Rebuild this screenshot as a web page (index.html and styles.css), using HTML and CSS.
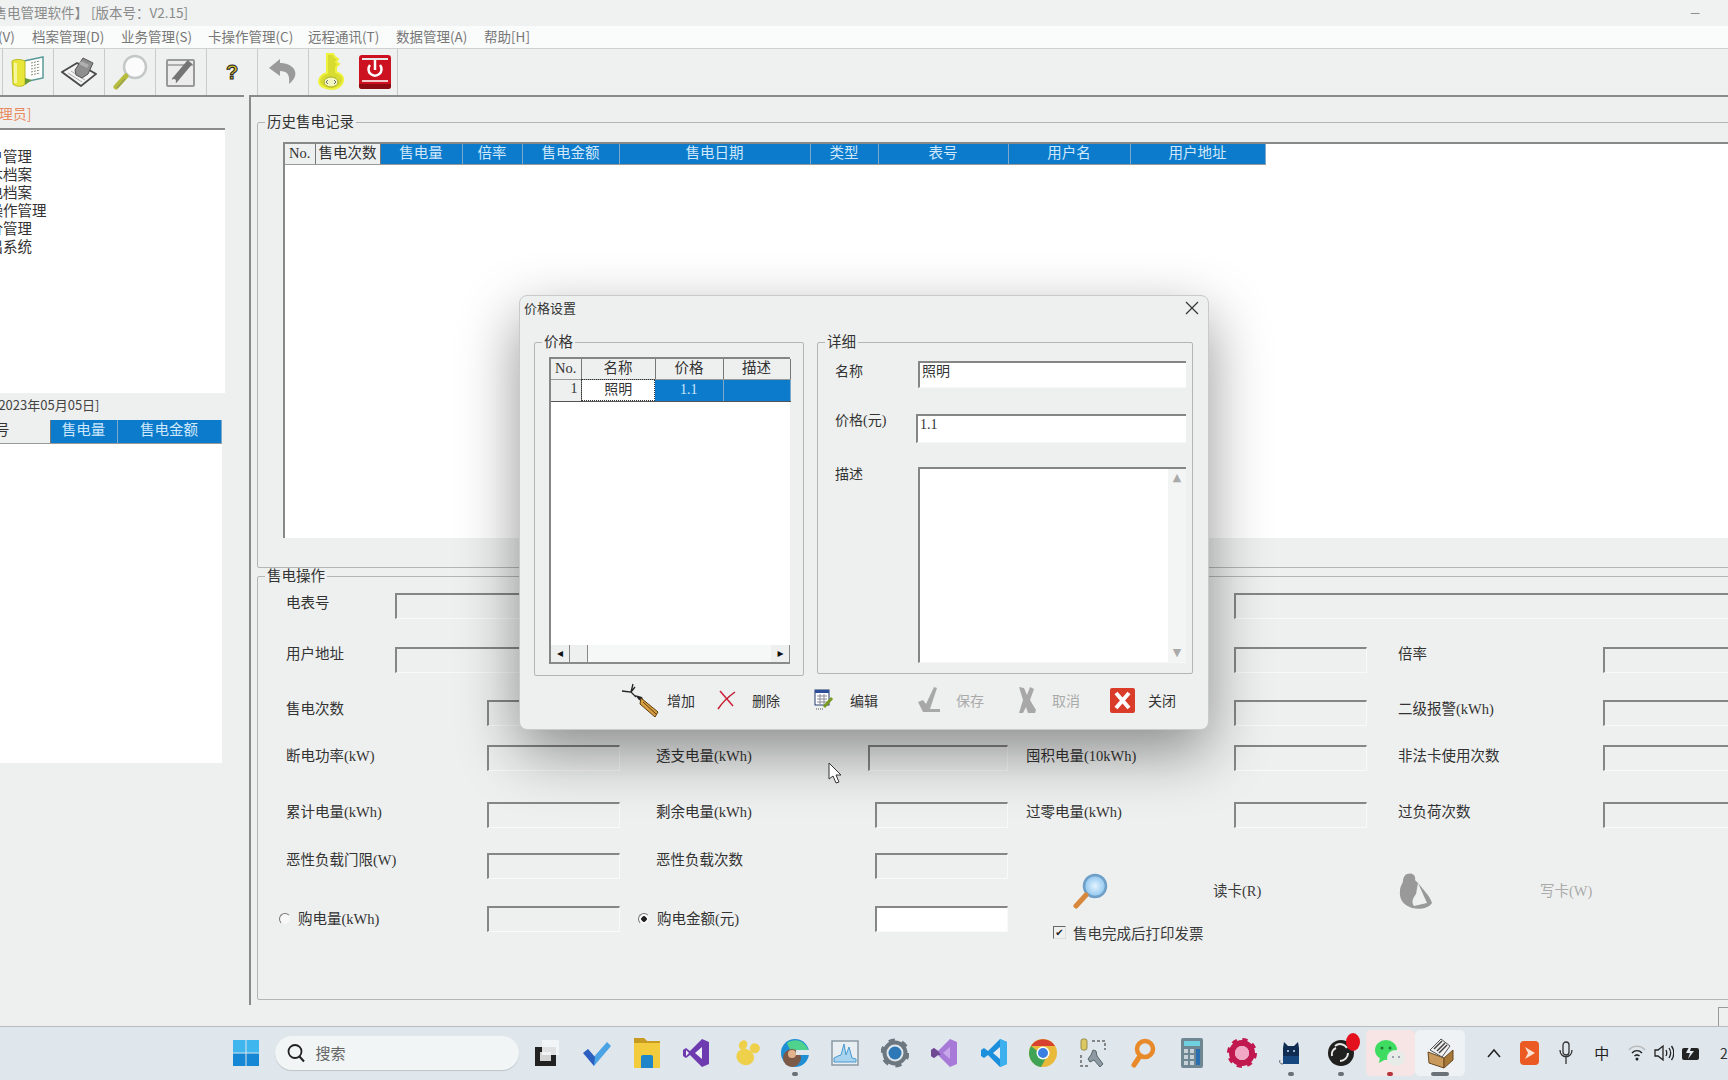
FILE: index.html
```html
<!DOCTYPE html>
<html lang="zh-CN">
<head>
    <meta charset="UTF-8">
    <title>售电管理软件</title>
    <link rel="stylesheet" href="styles.css">
</head>
<body>
    <div class="app">
        <div class="title-bar">
            <span class="title-text">【售电管理软件】 [版本号：V2.15]</span>
            <span class="minimize">—</span>
        </div>
        <nav class="menu-bar">
            <span class="menu-first">(V)</span>
            <span class="m1">档案管理(D)</span>
            <span class="m2">业务管理(S)</span>
            <span class="m3">卡操作管理(C)</span>
            <span class="m4">远程通讯(T)</span>
            <span class="m5">数据管理(A)</span>
            <span class="m6">帮助[H]</span>
        </nav>
        <div class="tool-bar">
            <div class="tool">
                <svg width="34" height="32" viewBox="0 0 34 32"><path fill="#fff" stroke="#5a9a98" stroke-width="1.500" d="M13 5l19-4v21l-19 4z"/><path stroke="#8a8a7a" stroke-dasharray="2 1" d="M20 7l9-2M20 10l9-2M20 13l9-2M20 16l9-2M20 19l9-2"/><path fill="#e8e63a" stroke="#b8b820" d="M1 5c3-2 9-2 13 0v23c-1 3-10 3-12 0z"/><path fill="#f6f5a0" d="M3 7h3v20H3z"/><path fill="#6a9a3a" d="M14 22l7 2-7 5z"/></svg>
            </div>
            <div class="tool">
                <svg width="36" height="30" viewBox="0 0 36 30"><path fill="#f4f4f4" stroke="#4a4a4a" stroke-width="1.800" d="M1 15L16 6l19 11-15 12z"/><path stroke="#aaa" d="M7 16l14 9M10 14l14 9"/><path fill="#8e8e8e" stroke="#555" d="M14 13l8-12 10 5-5 11-6 4-6-3z"/><path fill="#b0b0b0" d="M20 4l8 4-2 3-8-4z"/></svg>
            </div>
            <div class="tool">
                <svg width="36" height="36" viewBox="0 0 36 36"><circle cx="23" cy="13" r="11" fill="#fbfbfb" stroke="#c4c8c8" stroke-width="2.500"/><path stroke="#b6bc3c" stroke-width="5" stroke-linecap="round" d="M14 22L4 33"/><path stroke="#808a60" d="M13 25L5 34"/></svg>
            </div>
            <div class="tool">
                <svg width="32" height="32" viewBox="0 0 32 32"><rect x="2" y="4" width="27" height="26" rx="1" fill="#ececec" stroke="#999" stroke-width="2"/><path stroke="#999" stroke-width="1.500" d="M2 9h27"/><path stroke="#757575" stroke-width="6" d="M9 25L25 6"/><circle cx="9" cy="25" r="2" fill="#eee"/></svg>
            </div>
            <div class="tool"><span class="help-mark">?</span></div>
            <div class="tool">
                <svg width="30" height="30" viewBox="0 0 30 30"><path fill="#9a9a9a" d="M12 2L1 11l11 8v-5c7 0 10 3 9 13 6-5 8-10 5-15-3-4-8-6-14-6z"/></svg>
            </div>
            <div class="tool">
                <svg width="32" height="38" viewBox="0 0 32 38"><path fill="#d8dc30" stroke="#eef23c" stroke-width="2" d="M11 1h6l2 3 3 2-2 3 3 2-3 3v5c6 2 8 6 7 9-1 5-6 8-11 8S4 34 3 29c0-4 3-8 8-9z"/><ellipse cx="15" cy="29" rx="7" ry="5" fill="#f4f6c0" stroke="#a8ac20"/><path stroke="#667" fill="none" d="M12 27l-2 2 2 2M18 27l2 2-2 2"/></svg>
            </div>
            <div class="tool power">
                <svg width="32" height="34" viewBox="0 0 32 34"><rect width="32" height="34" rx="3" fill="#cc1220"/><path fill="#f3c9cc" d="M3 25h26v2H3z"/><path fill="#8d0a12" d="M0 29h32v2a3 3 0 0 1-3 3H3a3 3 0 0 1-3-3z"/><path fill="#e8e8e8" d="M3 3h26v2H3z"/><path fill="none" stroke="#fff" stroke-width="2.500" d="M11 10a6.500 6.500 0 1 0 10 0"/><path stroke="#fff" stroke-width="2.500" d="M16 5v10"/></svg>
            </div>
        </div>

        <div class="main">
            <aside class="left-pane">
                <div class="user-line">[管理员]</div>
                <ul class="tree">
                    <li>用户管理</li>
                    <li>基本档案</li>
                    <li>售电档案</li>
                    <li>卡操作管理</li>
                    <li>电价管理</li>
                    <li>退出系统</li>
                </ul>
                <div class="date-line">[2023年05月05日]</div>
                <div class="side-table">
                    <table class="grid">
                        <col width="80"><col width="67"><col width="104">
                        <tr><th class="side-no">表号</th><th class="sel">售电量</th><th class="sel">售电金额</th></tr>
                    </table>
                </div>
            </aside>

            <section class="right-pane">
                <fieldset class="group history">
                    <legend>历史售电记录</legend>
                    <div class="history-table">
                        <table class="grid">
                            <col width="30"><col width="65"><col width="82"><col width="60"><col width="97"><col width="191"><col width="68"><col width="130"><col width="122"><col width="135">
                            <tr>
                                <th>No.</th><th>售电次数</th><th class="sel">售电量</th><th class="sel">倍率</th><th class="sel">售电金额</th><th class="sel">售电日期</th><th class="sel">类型</th><th class="sel">表号</th><th class="sel">用户名</th><th class="sel">用户地址</th>
                            </tr>
                        </table>
                    </div>
                </fieldset>

                <fieldset class="group operate">
                    <legend>售电操作</legend>
                    <div class="op-row r1">
                        <span class="lbl col-short">电表号</span>
                        <div class="field col-a-wide"></div>
                        <div class="field col-c-wide"></div>
                    </div>
                    <div class="op-row r2">
                        <span class="lbl col-short">用户地址</span>
                        <div class="field col-a-wide"></div>
                        <div class="field col-c"></div>
                        <span class="lbl col-l4">倍率</span>
                        <div class="field col-d"></div>
                    </div>
                    <div class="op-row r3">
                        <span class="lbl col-a">售电次数</span>
                        <div class="field col-a2"></div>
                        <div class="field col-c"></div>
                        <span class="lbl col-l4">二级报警(kWh)</span>
                        <div class="field col-d"></div>
                    </div>
                    <div class="op-row r4">
                        <span class="lbl col-a">断电功率(kW)</span>
                        <div class="field col-a2"></div>
                        <span class="lbl col-l2">透支电量(kWh)</span>
                        <div class="field col-b wide"></div>
                        <span class="lbl col-l3">囤积电量(10kWh)</span>
                        <div class="field col-c"></div>
                        <span class="lbl col-l4">非法卡使用次数</span>
                        <div class="field col-d"></div>
                    </div>
                    <div class="op-row r5">
                        <span class="lbl col-a">累计电量(kWh)</span>
                        <div class="field col-a2"></div>
                        <span class="lbl col-l2">剩余电量(kWh)</span>
                        <div class="field col-b"></div>
                        <span class="lbl col-l3">过零电量(kWh)</span>
                        <div class="field col-c"></div>
                        <span class="lbl col-l4">过负荷次数</span>
                        <div class="field col-d"></div>
                    </div>
                    <div class="op-row r6">
                        <span class="lbl col-a">恶性负载门限(W)</span>
                        <div class="field col-a2"></div>
                        <span class="lbl col-l2">恶性负载次数</span>
                        <div class="field col-b"></div>
                        <div class="card-actions">
                            <svg width="36" height="36" viewBox="0 0 36 36"><defs><radialGradient id="lens"><stop offset="0" stop-color="#e4f4ff"/><stop offset="1" stop-color="#8cc4ee"/></radialGradient></defs><circle cx="23" cy="13" r="11" fill="url(#lens)" stroke="#6e9fc6" stroke-width="2.500"/><path stroke="#d8883c" stroke-width="5" stroke-linecap="round" d="M14 22L4 33"/></svg>
                            <span class="card-read">读卡(R)</span>
                            <svg width="34" height="36" viewBox="0 0 34 36"><path fill="#999" d="M8 1c6-2 9 2 8 6l2 2c5 6 13 14 15 21-3 5-12 7-20 5C4 32 0 26 1 18c0-5 3-8 3-10S5 2 8 1z"/><path fill="#eef0ef" d="M19 10l9 20-13 3c-3-4-1-8 2-12z"/></svg>
                            <span class="card-write">写卡(W)</span>
                        </div>
                    </div>
                    <div class="op-row r7">
                        <label class="lbl col-a radio-label"><span class="radio"></span>购电量(kWh)</label>
                        <div class="field col-a2"></div>
                        <label class="lbl col-l2 radio-label second"><span class="radio on"></span>购电金额(元)</label>
                        <div class="field col-b live"></div>
                        <label class="print-check"><span class="check">✔</span>售电完成后打印发票</label>
                    </div>
                </fieldset>
            </section>
        </div>

        <div class="status-bar"><span class="grip"></span></div>

        <footer class="task-bar">
            <div class="task-item">
                <svg width="28" height="28" viewBox="0 0 28 28"><path fill="#3fb6ee" d="M1 1h12.500v12.500H1zM14.500 1H27v12.500H14.500z"/><path fill="#1587d4" d="M1 14.500h12.500V27H1zM14.500 14.500H27V27H14.500z"/></svg>
            </div>
            <div class="search-box">
                <svg width="20" height="20" viewBox="0 0 20 20"><circle cx="9" cy="8.500" r="6.500" fill="none" stroke="#222" stroke-width="1.800"/><path stroke="#222" stroke-width="2" d="M13.500 13.500L18 18.500"/></svg>
                <span>搜索</span>
            </div>
            <div class="task-apps">
                <div class="task-item"><svg width="28" height="28" viewBox="0 0 28 28"><path fill="#222" d="M2 8h21v19H2z"/><path fill="#d4d4d4" d="M7 13h11v9H7z"/><path fill="#f4f6f8" d="M9 1h17v15H9z" opacity=".9"/></svg></div>
                <div class="task-item"><svg width="30" height="28" viewBox="0 0 30 28"><path fill="#4ba3e6" d="M10 20L25 3l4 4-17 20z"/><path fill="#2a5ec0" d="M1 14l5-4 7 8-1 9z"/></svg></div>
                <div class="task-item"><svg width="28" height="32" viewBox="0 0 28 32"><path fill="#f3cc3d" d="M1 1h10l3 3h13v27H1z"/><path fill="#c89b22" d="M1 1h10l3 3h13v2H1z"/><path fill="#1f86c9" d="M8 20a2 2 0 0 1 2-2h8a2 2 0 0 1 2 2v11H8z"/></svg></div>
                <div class="task-item"><svg width="28" height="30" viewBox="0 0 28 30"><path fill="#6d3ab0" d="M20 1l7 3v22l-7 3L8 17l-4 3-3-2V12l3-2 4 3z"/><path fill="#eef1f4" d="M20 9v12l-7-6zM4 12l3 3-3 3z"/></svg></div>
                <div class="task-item"><svg width="28" height="28" viewBox="0 0 28 28"><g fill="#eed04a" transform="rotate(25 14 14)"><ellipse cx="15" cy="18" rx="9" ry="8"/><ellipse cx="20" cy="6" rx="5" ry="5"/><ellipse cx="8" cy="8" rx="4" ry="5"/></g></svg></div>
                <div class="task-item on">
                    <svg width="30" height="30" viewBox="0 0 30 30"><circle cx="15" cy="15" r="14" fill="#1f8fd4"/><path fill="#4fd38c" d="M7 5c8-6 20-2 22 10H11C10 10 8 8 7 5z"/><circle cx="12" cy="20" r="9" fill="#7d5a48"/><circle cx="12" cy="16" r="4" fill="#e3b48c"/><path fill="#dfe6ec" d="M16 12h14v5H16z"/></svg>
                </div>
                <div class="task-item"><svg width="28" height="28" viewBox="0 0 28 28"><path fill="#e8eef2" stroke="#8c9aa4" stroke-width="1.500" d="M1 2h26v24H1z"/><path fill="#a8d4f0" stroke="#4a9ad0" d="M3 23v-4l4-2 3-1 3-11 2 11 3-8 3 11 4 1v3z"/></svg></div>
                <div class="task-item"><svg width="28" height="30" viewBox="0 0 28 30"><circle cx="14" cy="15" r="10.500" fill="none" stroke="#6d7780" stroke-width="4"/><circle cx="14" cy="15" r="12.500" fill="none" stroke="#6d7780" stroke-width="4" stroke-dasharray="6 7.100"/><circle cx="14" cy="15" r="6.500" fill="#2f78b8"/></svg></div>
                <div class="task-item"><svg width="28" height="30" viewBox="0 0 28 30"><path fill="#a77ad8" d="M20 1l7 3v22l-7 3L8 17l-4 3-3-2V12l3-2 4 3z"/><path fill="#6e4a94" d="M4 10l4 3 3 4-3 0-4 3-3-2V12z"/><path fill="#c8a6ea" d="M20 9v12l-7-6z"/></svg></div>
                <div class="task-item"><svg width="28" height="30" viewBox="0 0 28 30"><path fill="#1c8fdc" d="M20 1l7 3v22l-7 3L8 17l-4 3-3-2V12l3-2 4 3z"/><path fill="#3fb0ee" d="M20 1l7 3v22l-7 3z"/><path fill="#e6ebf0" d="M20 9v12l-7-6z"/></svg></div>
                <div class="task-item"><svg width="30" height="30" viewBox="0 0 30 30"><circle cx="15" cy="15" r="14" fill="#e8b93a"/><path fill="#d8402f" d="M3 8a14 14 0 0 1 24 0H15z"/><path fill="#3fa455" d="M3 8a14 14 0 0 0 10 21l5-9z"/><circle cx="15" cy="15" r="6.500" fill="#fff"/><circle cx="15" cy="15" r="5" fill="#3a7fe0"/></svg></div>
                <div class="task-item"><svg width="30" height="30" viewBox="0 0 30 30"><rect x="3" y="1" width="6" height="11" rx="2" fill="#dcc860" stroke="#98904c"/><path fill="none" stroke="#666" stroke-dasharray="3 2" stroke-width="1.500" d="M14 3h13v9M3 17v11h8"/><path fill="#8d99a3" stroke="#566" d="M15 12l3 1 1 5 6 8-3 3-6-7-4 2-2-3 3-4z"/></svg></div>
                <div class="task-item"><svg width="28" height="30" viewBox="0 0 28 30"><circle cx="16" cy="11" r="8" fill="none" stroke="#e88a2a" stroke-width="4.500"/><path stroke="#e88a2a" stroke-width="5" stroke-linecap="round" d="M11 18L5 27"/></svg></div>
                <div class="task-item"><svg width="24" height="30" viewBox="0 0 24 30"><rect x="1" width="22" height="30" rx="2" fill="#6f8793"/><path fill="#6fd0e0" d="M4 3h16v5H4z"/><path fill="#c7d2d8" d="M4 11h4v4H4zM10 11h4v4h-4zM4 17h4v4H4zM10 17h4v4h-4zM4 23h4v4H4zM10 23h4v4h-4z"/><path fill="#2b6fb0" d="M16 11h4v16h-4z"/></svg></div>
                <div class="task-item"><svg width="30" height="30" viewBox="0 0 30 30"><circle cx="15" cy="15" r="10" fill="none" stroke="#c0184f" stroke-width="6"/><circle cx="15" cy="15" r="13" fill="none" stroke="#c0184f" stroke-width="4" stroke-dasharray="5 5.200"/><circle cx="15" cy="15" r="7" fill="#f0a8c4"/></svg></div>
                <div class="task-item on"><svg width="24" height="26" viewBox="0 0 24 26"><path fill="#0f2d52" d="M4 24V8l1-6 4 4h6l4-4 1 6v16z"/><path fill="#16467e" d="M4 16h16v8H4z"/><circle cx="9" cy="11" r="1" fill="#cde"/><circle cx="15" cy="11" r="1" fill="#cde"/><path stroke="#556" fill="none" d="M4 24c-3 0-4-2-3-4"/></svg></div>
                <div class="task-item on">
                    <svg width="30" height="30" viewBox="0 0 30 30"><circle cx="15" cy="15" r="13" fill="#20201f"/><path fill="none" stroke="#e8e8e8" stroke-width="2" d="M9 8a8 8 0 0 1 12 2M22 15a8 8 0 0 1-8 8M6 18a7 7 0 0 1 4-8"/></svg>
                    <span class="badge"></span>
                </div>
                <div class="task-item wechat on"><svg width="32" height="30" viewBox="0 0 32 30"><ellipse cx="12" cy="12" rx="11" ry="10" fill="#3fdc62"/><path fill="#3fdc62" d="M6 19l-1 6 7-4z"/><circle cx="8" cy="10" r="1.500" fill="#1a7a34"/><circle cx="16" cy="10" r="1.500" fill="#1a7a34"/><ellipse cx="22" cy="20" rx="9" ry="8" fill="#e8ece8"/><circle cx="19" cy="19" r="1" fill="#889"/><circle cx="25" cy="19" r="1" fill="#889"/></svg></div>
                <div class="task-item current on"><svg width="30" height="32" viewBox="0 0 30 32"><path fill="#c99a5c" stroke="#6a4a22" d="M3 15l16 6v10L4 26z"/><path fill="#a87838" stroke="#6a4a22" d="M19 21l9-8v10l-9 8z"/><path fill="#f0f0f0" stroke="#555" d="M5 13L16 2l9 7-8 11z"/><path stroke="#444" stroke-width="1.500" d="M9 12l8-8M12 14l8-8M14 16l8-8"/></svg></div>
            </div>
            <div class="tray">
                <span class="tray-item"><svg width="14" height="10" viewBox="0 0 14 10"><path fill="none" stroke="#222" stroke-width="1.500" d="M1 9l6-7 6 7"/></svg></span>
                <span class="tray-item"><svg width="20" height="24" viewBox="0 0 20 24"><rect width="19" height="24" rx="4" fill="#ea5a22"/><path fill="#fbe2d4" d="M5 6l10 6-10 6 3-6z"/></svg></span>
                <span class="tray-item"><svg width="14" height="24" viewBox="0 0 14 24"><rect x="4" y="1" width="6" height="13" rx="3" fill="none" stroke="#333" stroke-width="1.300"/><path fill="none" stroke="#333" stroke-width="1.300" d="M1 9c0 9 12 9 12 0M7 16v7"/></svg></span>
                <span class="tray-item ime">中</span>
                <span class="tray-item slim"><svg width="18" height="18" viewBox="0 0 18 18"><path fill="none" stroke="#bbb" stroke-width="1.500" d="M1 6c4-5 12-5 16 0"/><path fill="none" stroke="#222" stroke-width="1.500" d="M4 9c3-3 7-3 10 0M6.500 12c1.500-1.500 3.500-1.500 5 0"/><circle cx="9" cy="15" r="1.500" fill="#222"/></svg></span>
                <span class="tray-item slim"><svg width="20" height="18" viewBox="0 0 20 18"><path fill="none" stroke="#222" stroke-width="1.300" d="M1 6h3l5-4v14l-5-4H1zM12 6c1 2 1 4 0 6M15 4c2 3 2 7 0 10M17.500 2c3 4 3 10 0 14"/></svg></span>
                <span class="tray-item slim"><svg width="22" height="20" viewBox="0 0 22 20"><rect x="2" y="5" width="17" height="12" rx="2" fill="#222"/><path fill="#e3e9ef" d="M10 2L6 10h4l-2 6 6-8h-4l2-6z"/></svg></span>
                <span class="clock">2</span>
            </div>
        </footer>
    </div>

    <div class="dialog">
        <div class="dlg-title">
            <span>价格设置</span>
            <svg width="14" height="14" viewBox="0 0 14 14"><path stroke="#333" stroke-width="1.200" d="M1 1l12 12M13 1L1 13"/></svg>
        </div>
        <div class="dlg-body">
            <fieldset class="group price-group">
                <legend>价格</legend>
                <div class="price-table">
                    <table class="grid">
                        <col width="30"><col width="74"><col width="68"><col width="67">
                        <tr><th>No.</th><th>名称</th><th>价格</th><th>描述</th></tr>
                        <tr class="row"><th class="row-no">1</th><td class="focus">照明</td><td class="sel">1.1</td><td class="sel"></td></tr>
                    </table>
                    <div class="h-scroll">
                        <span class="arrow-btn">◂</span>
                        <span class="thumb"></span>
                        <span class="arrow-btn end">▸</span>
                    </div>
                </div>
            </fieldset>
            <fieldset class="group detail-group">
                <legend>详细</legend>
                <div class="detail-row name-row">
                    <span class="detail-label">名称</span>
                    <div class="input">照明</div>
                </div>
                <div class="detail-row cost-row">
                    <span class="detail-label">价格(元)</span>
                    <div class="input">1.1</div>
                </div>
                <div class="detail-row desc-row">
                    <span class="detail-label">描述</span>
                    <div class="input memo">
                        <div class="v-scroll"><span>▲</span><span>▼</span></div>
                    </div>
                </div>
            </fieldset>
        </div>
        <div class="dlg-buttons">
            <div class="dlg-btn tight">
                <svg width="38" height="34" viewBox="0 0 38 34"><path fill="none" stroke="#222" stroke-width="1.300" d="M1 8l9 1 5 5M10 9l2-8M10 9l4-5"/><path fill="#222" d="M14 12l7 2 2 5-5-2z"/><path fill="#d8a040" stroke="#5a3a10" d="M20 15l17 14-3 5-15-13z"/><path stroke="#5a3a10" d="M22 19l13 12"/></svg>
                <span>增加</span>
            </div>
            <div class="dlg-btn">
                <svg width="19" height="20" viewBox="0 0 19 20"><path fill="none" stroke="#d0203a" stroke-width="1.500" d="M3 1l13 15"/><path fill="none" stroke="#c01c30" stroke-width="1.500" d="M18 2C11 7 5 13 1 19"/></svg>
                <span>删除</span>
            </div>
            <div class="dlg-btn">
                <svg width="20" height="22" viewBox="0 0 20 22"><rect x="1" y="1" width="14" height="15" fill="#fff" stroke="#223a6a"/><path fill="#2d4f9a" d="M1 1h14v3H1z"/><path stroke="#889" d="M3 7h10M3 10h10M3 13h10M6 5v10M10 5v10"/><path stroke="#7a9a22" stroke-width="3" d="M10 18l8-9"/><path stroke="#555" stroke-dasharray="1 1" d="M2 20h8"/></svg>
                <span>编辑</span>
            </div>
            <div class="dlg-btn off">
                <svg width="22" height="26" viewBox="0 0 22 26"><path fill="#a8a8a8" d="M0 15l5-2 3 4L16 0l3 1-7 21h10v3H5z"/></svg>
                <span>保存</span>
            </div>
            <div class="dlg-btn off">
                <svg width="18" height="26" viewBox="0 0 18 26"><path fill="#a8a8a8" d="M1 0l5 1 3 7 3-8 4 2-4 11 6 10-1 3H10l-2-6-3 6H1l4-13z"/></svg>
                <span>取消</span>
            </div>
            <div class="dlg-btn close">
                <svg width="25" height="25" viewBox="0 0 25 25"><rect width="25" height="25" rx="2" fill="#d93d2a"/><path stroke="#fff" stroke-width="4" d="M6 5l13 15M19 5L6 20"/></svg>
                <span>关闭</span>
            </div>
        </div>
    </div>

    <svg class="cursor" width="16" height="22" viewBox="0 0 16 22"><path fill="#fff" stroke="#333" d="M1 1v16l4-3 3 7 3-1-3-7h5z"/></svg>
</body>
</html>
```

FILE: styles.css
```css
* {
    margin: 0;
    padding: 0;
    box-sizing: border-box;
}

html, body {
    width: 1728px;
    height: 1080px;
    overflow: hidden;
}

body {
    background-color: #eef0ef;
    color: #3a3a3a;
    font-family: "Liberation Serif", "Noto Sans CJK SC", serif;
    font-size: 14.5px;
    position: relative;
}

.app {
    display: flex;
    flex-direction: column;
    height: 1080px;
}

/* window chrome */
.title-bar {
    height: 26px;
    display: flex;
    justify-content: space-between;
    align-items: center;
    padding: 0 28px 2px 0;
    background-color: #eff2f1;
    font-family: "Noto Sans CJK SC", sans-serif;
    font-size: 13.5px;
    color: #8a8a8a;
}

.title-text {
    margin-left: -20px;
}

.minimize {
    color: #777;
    font-size: 11px;
}

.menu-bar {
    height: 23px;
    display: flex;
    align-items: center;
    padding-bottom: 2px;
    background-color: #fafbfb;
    border-bottom: 1px solid #cfd1d0;
    font-family: "Noto Sans CJK SC", sans-serif;
    font-size: 13.5px;
    color: #777;
}

.menu-first { width: 32px; margin-left: -2px; }
.m1 { width: 89px; margin-left: 2px; }
.m2 { width: 87px; }
.m3 { width: 100px; }
.m4 { width: 88px; }
.m5 { width: 88px; }

.tool-bar {
    height: 46px;
    display: flex;
    padding-left: 2px;
    background-color: #eff1f0;
}

.tool {
    width: 51px;
    display: flex;
    align-items: center;
    justify-content: center;
    border-left: 1px solid #c9cbca;
}

.tool:nth-child(7) {
    width: 46px;
}

.tool:nth-child(8) {
    width: 44px;
    padding-right: 2px;
    border-left: none;
    border-right: 1px solid #c9cbca;
}

.help-mark {
    font-family: "Liberation Sans", sans-serif;
    font-weight: bold;
    font-size: 20px;
    color: #d8c030;
    -webkit-text-stroke: 1px #222;
}

/* split panes */
.main {
    flex: 1;
    display: flex;
    min-height: 0;
}

.left-pane {
    width: 244px;
    border-top: 2px solid #8a8a8a;
    overflow: hidden;
}

.user-line {
    height: 31px;
    line-height: 32px;
    margin-left: -20px;
    color: #e88a60;
    font-family: "Noto Sans CJK SC", sans-serif;
    font-size: 14px;
}

.tree {
    width: 225px;
    height: 265px;
    padding: 17px 0 0 0;
    list-style: none;
    background-color: #fff;
    border-top: 2px solid #8c8c8c;
    font-family: "Noto Sans CJK SC", sans-serif;
    font-size: 14.5px;
    color: #333;
}

.tree li {
    height: 18px;
    line-height: 18px;
    margin-left: -26px;
}

.date-line {
    height: 27px;
    line-height: 24px;
    margin-left: -6px;
    font-family: "Noto Sans CJK SC", sans-serif;
    font-size: 13px;
    color: #444;
}

.side-table {
    width: 222px;
    height: 343px;
    background-color: #fff;
}

.side-table .grid {
    margin-left: -30px;
}

.grid th.side-no {
    height: 23px;
    text-align: right;
    padding-right: 40px;
    white-space: nowrap;
}

.right-pane {
    flex: 1;
    min-width: 0;
    overflow: hidden;
    display: flex;
    flex-direction: column;
    padding: 17px 0 5px 6px;
    border-top: 2px solid #8a8a8a;
    border-left: 2px solid #8a8a8a;
    margin-left: 5px;
}

.group {
    border: 1px solid #b4b6b5;
    border-radius: 2px;
}

.group legend {
    padding: 0 2px;
    height: 16px;
    line-height: 13px;
    font-family: "Noto Sans CJK SC", sans-serif;
    color: #333;
}

.history legend { margin-left: -18px; }
.operate legend { margin-left: -21px; }
.price-group legend { margin-left: -7px; }
.detail-group legend { margin-left: -10px; }

.history {
    width: 1500px;
    height: 454px;
    flex: none;
    padding: 12px 0 0 25px;
}

.history-table {
    width: 1450px;
    height: 396px;
    background-color: #fff;
    border-top: 2px solid #888;
    border-left: 2px solid #888;
}

/* header cells shared by every grid on the page */
.grid {
    width: 1px;
    table-layout: fixed;
    border-collapse: collapse;
    font-family: "Liberation Serif", "Noto Sans CJK SC", serif;
}

.grid th {
    height: 20px;
    line-height: 16px;
    padding-bottom: 2px;
    font-weight: normal;
    font-size: 14.5px;
    color: #333;
    background-color: #eef0ef;
    border-right: 1px solid #777;
    border-bottom: 1px solid #999;
}

.grid th.sel, .grid td.sel {
    background-color: #0c7bcb;
    color: #cfe8fb;
    border-right: 1px solid #7fa9c8;
}

.operate {
    width: 1500px;
    flex: 1;
    padding: 9px 0 0 28px;
}

.op-row {
    display: grid;
    grid-template-columns: 109px 92px 169px 212px 158px 208px 164px 205px 300px;
    align-items: start;
}

.r1 { height: 54px; }
.r2 { height: 53px; }
.r3 { height: 45px; }
.r4 { height: 57px; }
.r5 { height: 51px; }
.r6 { height: 53px; }
.r7 { height: 60px; }

.lbl {
    line-height: 14px;
    padding-top: 3px;
    white-space: nowrap;
    color: #333;
}

.r2 .lbl, .r6 .lbl { padding-top: 0; }
.r3 .lbl { padding-top: 2px; }
.r4 .lbl { padding-top: 4px; }
.r7 .lbl { padding-top: 6px; }

.col-short { grid-column: 1; }
.col-a { grid-column: 1 / 3; }
.col-l2 { grid-column: 4; }
.col-l3 { grid-column: 6; }
.col-l4 { grid-column: 8; }

.field {
    height: 26px;
    border-top: 2px solid #868686;
    border-left: 2px solid #868686;
    border-right: 1px solid #f8f9f8;
    border-bottom: 1px solid #f8f9f8;
}

.col-a-wide { grid-column: 2 / 4; width: 300px; }
.col-a2 { grid-column: 3; width: 133px; }
.col-b { grid-column: 5; width: 133px; margin-left: 7px; }
.col-b.wide { width: 140px; margin-left: 0; }
.col-c { grid-column: 7; width: 133px; }
.col-c-wide { grid-column: 7 / 10; }
.col-d { grid-column: 9; }

.field.live {
    background-color: #fff;
}

.radio-label {
    display: flex;
    align-items: center;
    margin-left: -7px;
}

.radio-label.second {
    margin-left: -18px;
}

.radio {
    width: 12px;
    height: 12px;
    margin-right: 7px;
    border-radius: 50%;
    border: 1px solid;
    border-color: #777 #eee #eee #777;
    background-color: #f8f8f8;
}

.radio.on {
    background: radial-gradient(circle, #222 0 2.500px, #f8f8f8 3px);
}

.card-actions {
    grid-column: 6 / 10;
    display: flex;
    align-items: center;
    margin: 20px 0 0 46px;
}

.card-read { margin: -4px 0 0 105px; width: 186px; }
.card-write { margin: -4px 0 0 107px; color: #aaa; }

.print-check {
    grid-column: 6 / 10;
    display: flex;
    align-items: center;
    margin: 16px 0 0 27px;
}

.check {
    width: 13px;
    height: 13px;
    margin-right: 7px;
    border: 1px solid;
    border-color: #666 #ddd #ddd #666;
    font-size: 10px;
    line-height: 11px;
    text-align: center;
    color: #222;
    font-family: "DejaVu Sans", sans-serif;
}

.status-bar {
    height: 22px;
    display: flex;
    justify-content: flex-end;
    background-color: #eef0ef;
    border-bottom: 1px solid #b8bcbd;
}

.grip {
    width: 10px;
    margin-top: 2px;
    border-top: 1px solid #999;
    border-left: 1px solid #999;
}

/* dialog floats over the main window */
.dialog {
    position: absolute;
    left: 519px;
    top: 295px;
    width: 690px;
    height: 435px;
    display: flex;
    flex-direction: column;
    padding: 0 14px;
    background-color: #eef0ef;
    border: 1px solid #c8cacb;
    border-radius: 8px;
    box-shadow: 0 22px 60px rgba(0, 0, 0, 0.42);
}

.dlg-title {
    height: 38px;
    margin: 0 -5px 0 -10px;
    padding-bottom: 15px;
    display: flex;
    justify-content: space-between;
    align-items: center;
    font-family: "Noto Sans CJK SC", sans-serif;
    font-size: 13px;
    color: #333;
}

.dlg-body {
    display: flex;
    gap: 13px;
}

.price-group {
    width: 270px;
    height: 342px;
    padding: 7px 0 0 14px;
}

.detail-group {
    width: 376px;
    height: 340px;
    padding: 11px 0 0 17px;
}

.price-table {
    width: 241px;
    height: 307px;
    display: flex;
    flex-direction: column;
    justify-content: space-between;
    background-color: #fff;
    border: 2px solid #858585;
    border-right: none;
    border-bottom: none;
}

.price-table .row td, .price-table .row th {
    height: 22px;
    line-height: 16px;
    font-size: 14px;
    text-align: center;
    border-bottom: 1px solid #555;
}

.price-table .row .row-no {
    text-align: right;
    padding-right: 3px;
}

.price-table .focus {
    background-color: #fff;
    color: #333;
    outline: 1px dotted #333;
    outline-offset: -1px;
}

.h-scroll {
    height: 19px;
    display: flex;
    justify-content: flex-start;
    background-color: #f6f7f7;
    border-bottom: 2px solid #8a8a8a;
    font-size: 12px;
    color: #111;
}

.arrow-btn {
    width: 19px;
    text-align: center;
    line-height: 17px;
    font-family: "DejaVu Sans", sans-serif;
    background-color: #eef0ef;
    border-right: 1px solid #888;
}

.arrow-btn.end {
    margin-left: auto;
    border-left: 1px solid #eee;
}

.thumb {
    width: 18px;
    border-right: 1px solid #888;
    background-color: #eef0ef;
}

.detail-row {
    display: flex;
    align-items: flex-start;
}

.detail-label {
    width: 83px;
    line-height: 18px;
    color: #333;
    font-size: 14px;
}

.name-row { height: 53px; }
.name-row .detail-label { margin-top: 2px; }
.cost-row { height: 53px; }
.cost-row .detail-label { width: 81px; margin-top: -2px; }
.desc-row .detail-label { margin-top: -1px; }

.input {
    width: 268px;
    height: 27px;
    padding-left: 2px;
    background-color: #fff;
    border-top: 2px solid #858585;
    border-left: 2px solid #858585;
    border-bottom: 1px solid #f6f7f7;
    font-size: 14px;
    line-height: 18px;
    color: #333;
}

.cost-row .input {
    width: 270px;
    height: 29px;
}

.input.memo {
    height: 196px;
    display: flex;
    justify-content: flex-end;
}

.v-scroll {
    width: 18px;
    display: flex;
    flex-direction: column;
    justify-content: space-between;
    text-align: center;
    background-color: #f3f4f4;
    font-family: "DejaVu Sans", sans-serif;
    font-size: 11px;
    color: #aaa;
}

.dlg-buttons {
    display: grid;
    grid-template-columns: 96px 97px 104px 100px 92px auto;
    align-items: center;
    height: 48px;
    padding-left: 87px;
}

.dlg-btn {
    display: flex;
    align-items: center;
    font-family: "Noto Sans CJK SC", sans-serif;
    font-size: 14px;
    color: #333;
}

.dlg-btn svg { margin-right: 16px; }
.dlg-btn.tight svg { margin-right: 8px; }
.dlg-btn.close svg { margin-right: 13px; }
.dlg-btn.off { color: #aaa; }

.cursor {
    position: absolute;
    left: 828px;
    top: 762px;
}

/* windows task bar */
.task-bar {
    height: 53px;
    display: flex;
    align-items: center;
    padding: 0 0 2px 221px;
    background-color: #dfe6ec;
    font-family: "Noto Sans CJK SC", sans-serif;
}

.task-apps {
    display: flex;
    margin-left: 4px;
}

.task-item {
    width: 49.600px;
    height: 46px;
    flex: none;
    display: flex;
    align-items: center;
    justify-content: center;
    position: relative;
    border-radius: 5px;
}

.task-item.on::after {
    content: '';
    position: absolute;
    left: 50%;
    bottom: 0;
    width: 6px;
    height: 4px;
    margin-left: -3px;
    border-radius: 2px;
    background-color: #6a7278;
}

.task-item.wechat {
    background-color: #f7e4e4;
}

.task-item.wechat::after {
    background-color: #b8323a;
}

.task-item.current {
    background-color: #eef2f5;
}

.task-item.current::after {
    width: 18px;
    margin-left: -9px;
}

.badge {
    position: absolute;
    right: 6px;
    top: 3px;
    width: 14px;
    height: 18px;
    border-radius: 50%;
    background-color: #e3101e;
}

.search-box {
    width: 244px;
    height: 34px;
    margin-left: 4px;
    display: flex;
    align-items: center;
    gap: 10px;
    padding-left: 11px;
    background-color: #f1f5f6;
    border-radius: 17px;
    box-shadow: 0 1px 1px rgba(0, 0, 0, 0.15);
    font-size: 15px;
    color: #666;
}

.tray {
    display: flex;
    align-items: center;
    margin-left: 11px;
}

.tray-item {
    width: 36px;
    display: flex;
    justify-content: center;
}

.tray-item.slim { width: 27px; }
.tray-item.ime { margin-right: 4px; font-size: 15px; color: #222; }

.clock {
    margin-left: 15px;
    font-size: 14px;
    color: #333;
}
```
